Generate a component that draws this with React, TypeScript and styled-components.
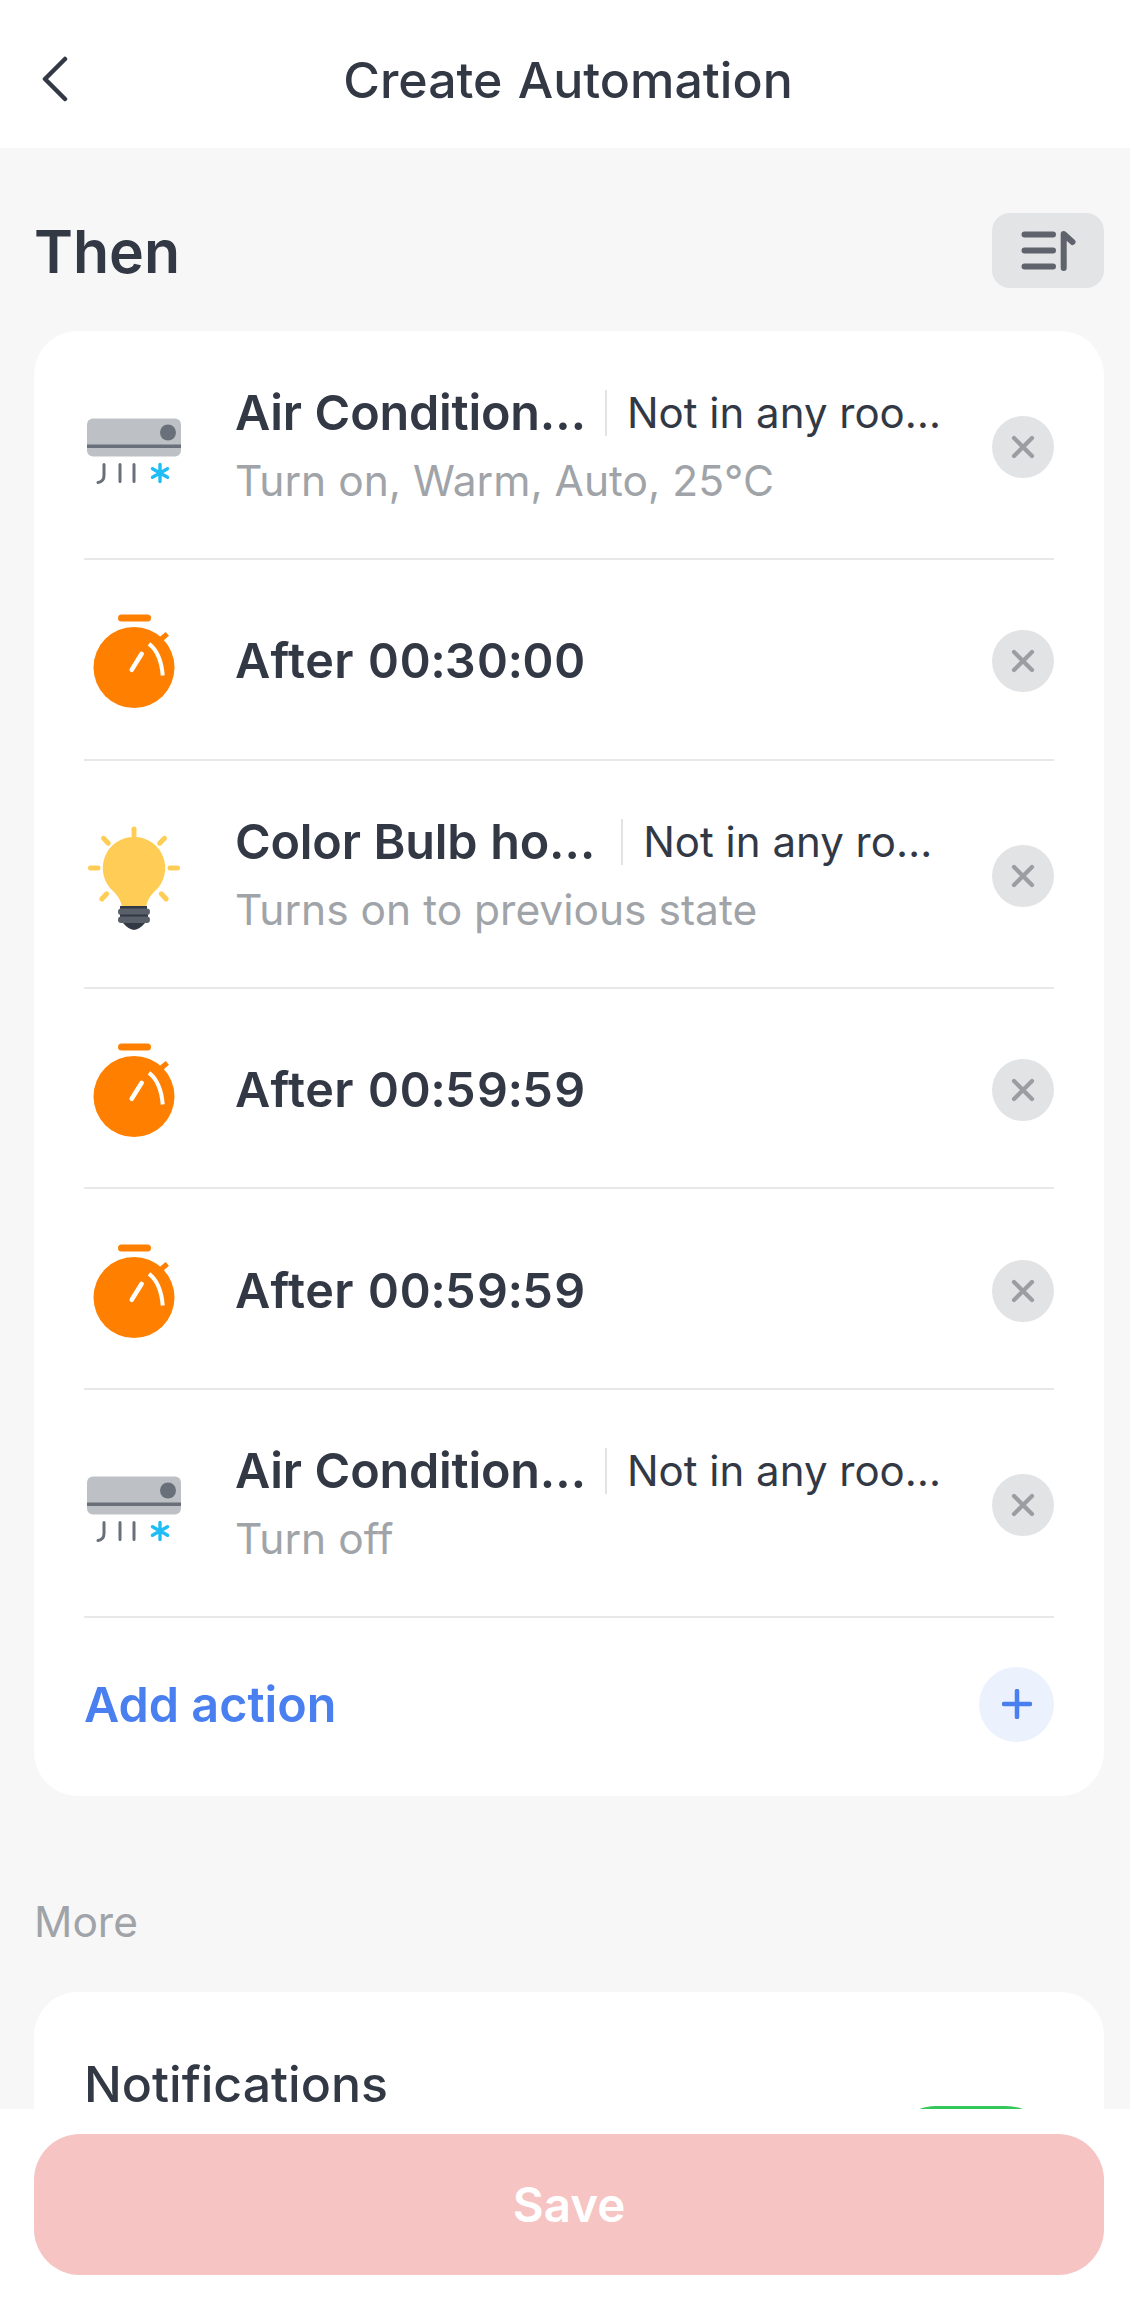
import React from 'react';
import styled, {createGlobalStyle} from "styled-components";

const AcIcon = () => (
    <IconSvg viewBox="0 0 100 100">
        <rect x="3" y="21.5" width="94" height="38" rx="6" fill="#bdc1c6"/>
        <rect x="3" y="47.5" width="94" height="3.5" fill="#6a7079"/>
        <circle cx="84" cy="35.5" r="8" fill="#6a7079"/>
        <path d="M20 67.5v11q0 6-6 7M36 67.5v17M50 67.5v17" fill="none" stroke="#6a7079" strokeWidth="3" strokeLinecap="round"/>
        <path d="M76 67.5v17M68.5 71.7l15 8.6M83.5 71.7l-15 8.6" fill="none" stroke="#1fbdf5" strokeWidth="3.4" strokeLinecap="round"/>
    </IconSvg>
);

const TimerIcon = () => (
    <IconSvg viewBox="0 0 100 100">
        <rect x="34" y="3.5" width="33" height="7" rx="3.5" fill="#ff8000"/>
        <path d="M76.7 28.5l6.6-5.7" stroke="#ff8000" strokeWidth="5" strokeLinecap="butt"/>
        <circle cx="50" cy="56.5" r="40.5" fill="#ff8000"/>
        <path d="M65 32.8Q77 42 78.7 64.5" fill="none" stroke="#fff" strokeWidth="4"/>
        <path d="M57.7 42.8L47.7 58.8" fill="none" stroke="#fff" strokeWidth="4.5" strokeLinecap="round"/>
    </IconSvg>
);

const BulbIcon = () => (
    <IconSvg viewBox="0 0 100 100">
        <path d="M50 3v6.5M6.5 42H14M86 42h7.5M19.5 12.3l4.8 4.9M80.5 12.3l-4.8 4.9M17.8 73l4.9-5.2M82.2 73l-4.9-5.2" fill="none" stroke="#ffcd56" strokeWidth="5" strokeLinecap="round"/>
        <path d="M50 11a31 31 0 0 1 21 54c-5 5-8 9-9 17H38c-1-8-4-12-9-17a31 31 0 0 1 21-54z" fill="#ffcd56"/>
        <rect x="36" y="80" width="27" height="3" fill="#333845"/>
        <rect x="34" y="82.5" width="32" height="6.5" rx="3.2" fill="#596069"/>
        <rect x="36" y="88.5" width="28" height="2.5" fill="#333845"/>
        <rect x="34" y="90.5" width="32" height="6.5" rx="3.2" fill="#596069"/>
        <path d="M39 97h22q-5 6-11 7-6-1-11-7z" fill="#333845"/>
    </IconSvg>
);

type RowData = {
    icon: React.ReactNode;
    title: string;
    room?: string;
    roomGap?: number;
    sub?: string;
};

const rows: RowData[] = [
    {icon: <AcIcon/>, title: "Air Condition…", room: "Not in any roo…", roomGap: 19, sub: "Turn on, Warm, Auto, 25°C"},
    {icon: <TimerIcon/>, title: "After 00:30:00"},
    {icon: <BulbIcon/>, title: "Color Bulb ho…", room: "Not in any ro…", roomGap: 26, sub: "Turns on to previous state"},
    {icon: <TimerIcon/>, title: "After 00:59:59"},
    {icon: <TimerIcon/>, title: "After 00:59:59"},
    {icon: <AcIcon/>, title: "Air Condition…", room: "Not in any roo…", roomGap: 19, sub: "Turn off"},
];

export default function App() {
    return (
        <>
            <GlobalStyle/>
            <Page>
                <Header>
                    <BackButton>
                        <svg width="30" height="46" viewBox="0 0 30 46">
                            <path d="M23 3L3 23l20 20" fill="none" stroke="#333845" strokeWidth="4.5" strokeLinecap="round" strokeLinejoin="round"/>
                        </svg>
                    </BackButton>
                    <HeaderTitle>Create Automation</HeaderTitle>
                </Header>
                <Content>
                    <SectionHead>
                        <SectionTitle>Then</SectionTitle>
                        <SortButton>
                            <svg width="56" height="44" viewBox="0 0 56 44">
                                <path d="M4.5 5.5H33M4.5 21.5H33M4.5 37.5H33M43.7 39V5l8.8 8" fill="none" stroke="#5f636c" strokeWidth="6" strokeLinecap="round" strokeLinejoin="round"/>
                            </svg>
                        </SortButton>
                    </SectionHead>
                    <Card>
                        {rows.map((row, i) => (
                            <Row key={i} $tall={!!row.sub}>
                                <IconBox>{row.icon}</IconBox>
                                <RowText>
                                    <TitleLine>
                                        <RowTitle $time={!row.room}>{row.title}</RowTitle>
                                        {row.room && <RoomName $gap={row.roomGap || 19}>{row.room}</RoomName>}
                                    </TitleLine>
                                    {row.sub && <RowSub>{row.sub}</RowSub>}
                                </RowText>
                                <RemoveButton>
                                    <svg width="24" height="24" viewBox="0 0 24 24">
                                        <path d="M3 3l18 18M21 3L3 21" fill="none" stroke="#9a9ea3" strokeWidth="4.2" strokeLinecap="round"/>
                                    </svg>
                                </RemoveButton>
                            </Row>
                        ))}
                        <AddRow>
                            <AddLabel>Add action</AddLabel>
                            <AddButton>
                                <svg width="30" height="30" viewBox="0 0 30 30">
                                    <path d="M15 2v26M2 15h26" fill="none" stroke="#4a7ff0" strokeWidth="4.5" strokeLinecap="round"/>
                                </svg>
                            </AddButton>
                        </AddRow>
                    </Card>
                    <MoreLabel>More</MoreLabel>
                    <MoreCard>
                        <NotifyTitle>Notifications</NotifyTitle>
                        <SwitchTrack/>
                    </MoreCard>
                </Content>
                <Footer>
                    <SaveButton>Save</SaveButton>
                </Footer>
            </Page>
        </>
    );
};

const GlobalStyle = createGlobalStyle`
  html, body {
    margin: 0;
    padding: 0;
    background: #f7f7f7;
  }

  body {
    font-family: Inter, "Liberation Sans", sans-serif;
    color: #333845;
  }

  button {
    font-family: inherit;
    border: none;
    padding: 0;
    cursor: pointer;
  }
`

const Page = styled.div`
  position: relative;
  width: 1130px;
  height: 2308px;
  overflow: hidden;
  background: #f7f7f7;
`

const Header = styled.header`
  position: relative;
  display: flex;
  align-items: center;
  justify-content: center;
  height: 148px;
  padding: 11px 0 0 6px;
  box-sizing: border-box;
  background: #fff;
`

const BackButton = styled.button`
  position: absolute;
  left: 42px;
  top: 56px;
  display: flex;
  background: none;
`

const HeaderTitle = styled.h1`
  margin: 0;
  font-size: 50px;
  font-weight: 500;
  word-spacing: 2px;
`

const Content = styled.main`
  padding: 65px 26px 0 34px;
`

const SectionHead = styled.div`
  display: flex;
  align-items: center;
  justify-content: space-between;
  height: 75px;
  margin-bottom: 43px;
`

const SectionTitle = styled.h2`
  margin: 2px 0 0;
  font-size: 59px;
  font-weight: 600;
  line-height: 75px;
`

const SortButton = styled.button`
  display: flex;
  align-items: center;
  justify-content: center;
  width: 112px;
  height: 75px;
  border-radius: 18px;
  background: #e3e4e6;
`

const Card = styled.section`
  padding: 1px 50px 0;
  border-radius: 44px;
  background: #fff;
`

const Row = styled.div<{ $tall: boolean }>`
  display: flex;
  align-items: center;
  box-sizing: border-box;
  height: ${props => props.$tall ? "228px" : "200.7px"};
  padding-top: 4px;
  border-bottom: 2px solid #e8e8e8;
`

const IconBox = styled.div`
  flex: none;
  width: 100px;
  height: 100px;
  margin-right: 51px;
`

const IconSvg = styled.svg`
  display: block;
  width: 100px;
  height: 100px;
  overflow: visible;
`

const RowText = styled.div`
  display: flex;
  flex: 1;
  flex-direction: column;
  gap: 16px;
  min-width: 0;
`

const TitleLine = styled.div`
  display: flex;
  align-items: center;
`

const RowTitle = styled.span<{ $time: boolean }>`
  font-size: 48.5px;
  font-weight: 600;
  line-height: 52px;
  white-space: nowrap;
  font-variant-numeric: tabular-nums;
  letter-spacing: ${props => props.$time ? "0.5px" : "-0.2px"};
`

const RoomName = styled.span<{ $gap: number }>`
  margin-left: ${props => props.$gap}px;
  padding-left: 20px;
  border-left: 2px solid #e2e3e5;
  font-size: 42px;
  line-height: 46px;
  white-space: nowrap;
`

const RowSub = styled.span`
  font-size: 42.5px;
  line-height: 52px;
  color: #a0a4a8;
`

const RemoveButton = styled.button`
  display: flex;
  flex: none;
  align-items: center;
  justify-content: center;
  width: 62px;
  height: 62px;
  border-radius: 50%;
  background: #e2e3e5;
`

const AddRow = styled.div`
  display: flex;
  align-items: center;
  justify-content: space-between;
  box-sizing: border-box;
  height: 178px;
  padding-bottom: 6px;
`

const AddLabel = styled.span`
  font-size: 48.5px;
  font-weight: 600;
  color: #4a7ff0;
`

const AddButton = styled.button`
  display: flex;
  align-items: center;
  justify-content: center;
  width: 75px;
  height: 75px;
  border-radius: 50%;
  background: #ebf1fd;
`

const MoreLabel = styled.div`
  margin-top: 100px;
  font-size: 42.5px;
  line-height: 52px;
  color: #a0a4a8;
`

const MoreCard = styled.section`
  position: relative;
  margin-top: 44px;
  height: 300px;
  padding: 64px 50px 0;
  border-radius: 44px;
  background: #fff;
`

const NotifyTitle = styled.div`
  font-size: 50px;
  font-weight: 500;
  line-height: 56px;
`

const SwitchTrack = styled.div`
  position: absolute;
  top: 114px;
  right: 50px;
  width: 166px;
  height: 96px;
  border-radius: 48px;
  background: #34c759;
`

const Footer = styled.footer`
  position: absolute;
  left: 0;
  right: 0;
  bottom: 0;
  height: 199px;
  padding: 25px 26px 0 34px;
  box-sizing: border-box;
  background: #fff;
`

const SaveButton = styled.button`
  display: block;
  width: 100%;
  height: 141px;
  border-radius: 46px;
  background: #f5c4c3;
  font-size: 47.5px;
  font-weight: 600;
  color: #fff;
`
